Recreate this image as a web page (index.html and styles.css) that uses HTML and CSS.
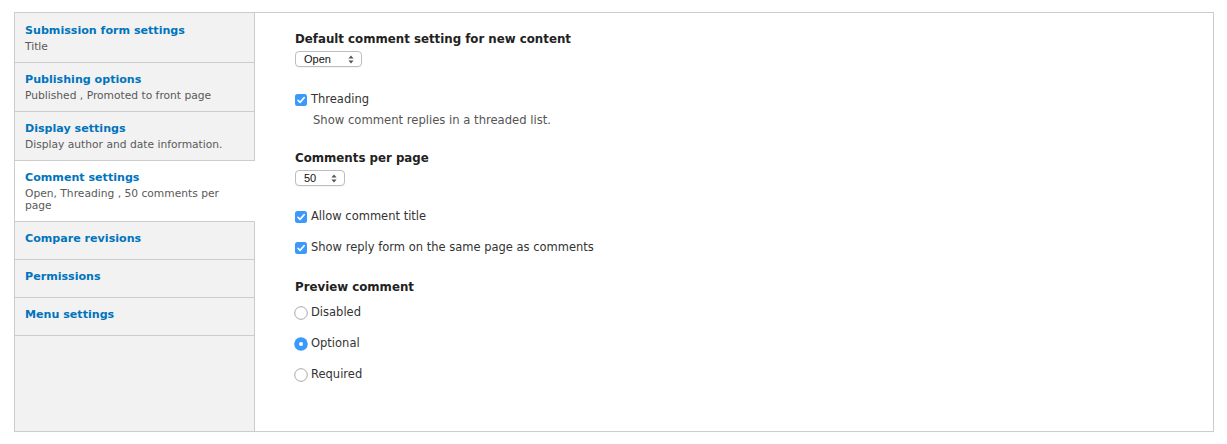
FILE: index.html
```html
<!DOCTYPE html>
<html lang="en">
<head>
<meta charset="utf-8">
<title>Comment settings</title>
<link rel="stylesheet" href="styles.css">
</head>
<body>
<div class="page">
  <div class="tabs">
    <ul class="tabs-menu">
      <li class="tab tab-first"><a class="tab-title" href="#">Submission form settings</a><span class="tab-summary">Title</span></li>
      <li class="tab"><a class="tab-title" href="#">Publishing options</a><span class="tab-summary">Published , Promoted to front page</span></li>
      <li class="tab"><a class="tab-title" href="#">Display settings</a><span class="tab-summary">Display author and date information.</span></li>
      <li class="tab is-active"><a class="tab-title" href="#">Comment settings</a><span class="tab-summary">Open, Threading , 50 comments per page</span></li>
      <li class="tab no-summary"><a class="tab-title" href="#">Compare revisions</a></li>
      <li class="tab no-summary"><a class="tab-title" href="#">Permissions</a></li>
      <li class="tab no-summary"><a class="tab-title" href="#">Menu settings</a></li>
    </ul>
    <div class="pane">
      <div class="field field-first">
        <div class="label">Default comment setting for new content</div>
        <span class="select sel-open">Open
          <svg class="arrows" width="6" height="9" viewBox="0 0 6 9"><path d="M3 0.5 L5.6 3.6 H0.4 Z M3 8.5 L5.6 5.4 H0.4 Z" fill="#555"/></svg>
        </span>
      </div>
      <div class="check check-threading">
        <svg class="cb" width="12" height="12" viewBox="0 0 12 12"><rect x="0" y="0" width="12" height="12" rx="2.5" fill="#3b99fc"/><path d="M3 6.3 L5 8.4 L9.2 3.6" stroke="#fff" stroke-width="1.6" fill="none" stroke-linecap="round" stroke-linejoin="round"/></svg>
        <span>Threading</span>
      </div>
      <div class="desc">Show comment replies in a threaded list.</div>
      <div class="field field-per-page">
        <div class="label">Comments per page</div>
        <span class="select sel-fifty">50
          <svg class="arrows" width="6" height="9" viewBox="0 0 6 9"><path d="M3 0.5 L5.6 3.6 H0.4 Z M3 8.5 L5.6 5.4 H0.4 Z" fill="#555"/></svg>
        </span>
      </div>
      <div class="check check-title">
        <svg class="cb" width="12" height="12" viewBox="0 0 12 12"><rect x="0" y="0" width="12" height="12" rx="2.5" fill="#3b99fc"/><path d="M3 6.3 L5 8.4 L9.2 3.6" stroke="#fff" stroke-width="1.6" fill="none" stroke-linecap="round" stroke-linejoin="round"/></svg>
        <span>Allow comment title</span>
      </div>
      <div class="check check-reply">
        <svg class="cb" width="12" height="12" viewBox="0 0 12 12"><rect x="0" y="0" width="12" height="12" rx="2.5" fill="#3b99fc"/><path d="M3 6.3 L5 8.4 L9.2 3.6" stroke="#fff" stroke-width="1.6" fill="none" stroke-linecap="round" stroke-linejoin="round"/></svg>
        <span>Show reply form on the same page as comments</span>
      </div>
      <div class="label label-preview">Preview comment</div>
      <div class="radio radio-first">
        <svg class="rb" width="14" height="14" viewBox="0 0 14 14"><circle cx="7" cy="7" r="6.3" fill="#fff" stroke="#a6a6a6" stroke-width="1"/></svg>
        <span>Disabled</span>
      </div>
      <div class="radio">
        <svg class="rb" width="14" height="14" viewBox="0 0 14 14"><circle cx="7" cy="7" r="6.8" fill="#3b99fc"/><circle cx="7" cy="7" r="2" fill="#fff"/></svg>
        <span>Optional</span>
      </div>
      <div class="radio">
        <svg class="rb" width="14" height="14" viewBox="0 0 14 14"><circle cx="7" cy="7" r="6.3" fill="#fff" stroke="#a6a6a6" stroke-width="1"/></svg>
        <span>Required</span>
      </div>
    </div>
  </div>
</div>
</body>
</html>
```

FILE: styles.css
```css
* { box-sizing: border-box; }
html, body { margin: 0; padding: 0; background: #fff; }
body {
  font-family: "DejaVu Sans", "Liberation Sans", sans-serif;
  color: #333;
  font-size: 12px;
}
.page {
  padding: 12px 13px 0 14px;
}
.tabs {
  display: flex;
  border: 1px solid #ccc;
  min-height: 420px;
}
.tabs-menu {
  list-style: none;
  margin: 0;
  padding: 0;
  width: 240px;
  flex: 0 0 240px;
  background: #f2f2f2;
  border-right: 1px solid #ccc;
}
.tab {
  display: flex;
  flex-direction: column;
  padding: 8px 10px 7px 10px;
  border-bottom: 1px solid #ccc;
}
.tab.tab-first {
  padding-top: 9px;
}
.tab.no-summary {
  padding-bottom: 11px;
}
.tab.is-active {
  background: #fff;
  margin-right: -1px;
}
.tab-title {
  color: #0074bd;
  font-weight: bold;
  font-size: 11.1px;
  line-height: 18px;
  text-decoration: none;
}
.tab-summary {
  color: #595959;
  font-size: 10.7px;
  line-height: 12px;
  padding-top: 1px;
  padding-bottom: 2px;
}
.pane {
  flex: 1;
  padding: 17px 40px 20px 40px;
}
.label {
  font-weight: bold;
  color: #222;
  font-size: 11.8px;
  line-height: 18px;
}
.field .label {
  margin-bottom: 3px;
}
.select {
  position: relative;
  display: flex;
  align-items: center;
  height: 16px;
  border: 1px solid #bdbdbd;
  border-radius: 4px;
  background: #fff;
  font-family: "Liberation Sans", Arial, sans-serif;
  font-size: 11px;
  color: #111;
  padding-left: 8px;
  box-shadow: 0 1px 0 rgba(0,0,0,0.04);
}
.sel-open { width: 67px; }
.sel-fifty { width: 50px; }
.arrows {
  position: absolute;
  right: 7px;
  top: 3px;
}
.check, .radio {
  display: flex;
  align-items: center;
  gap: 4px;
  line-height: 18px;
  color: #333;
  font-size: 11.5px;
}
.cb { flex: 0 0 12px; margin-top: 1px; }
.rb { flex: 0 0 14px; margin-left: -1px; margin-right: -1px; margin-top: 1px; }
.check-threading { margin-top: 23px; }
.desc {
  margin-top: 5px;
  margin-left: 18px;
  line-height: 15px;
  font-size: 11.6px;
  color: #555;
}
.field-per-page { margin-top: 21px; }
.check-title { margin-top: 21px; }
.check-reply { margin-top: 13px; }
.label-preview { margin-top: 22px; }
.radio { margin-top: 13px; }
.radio-first { margin-top: 7px; }
```
